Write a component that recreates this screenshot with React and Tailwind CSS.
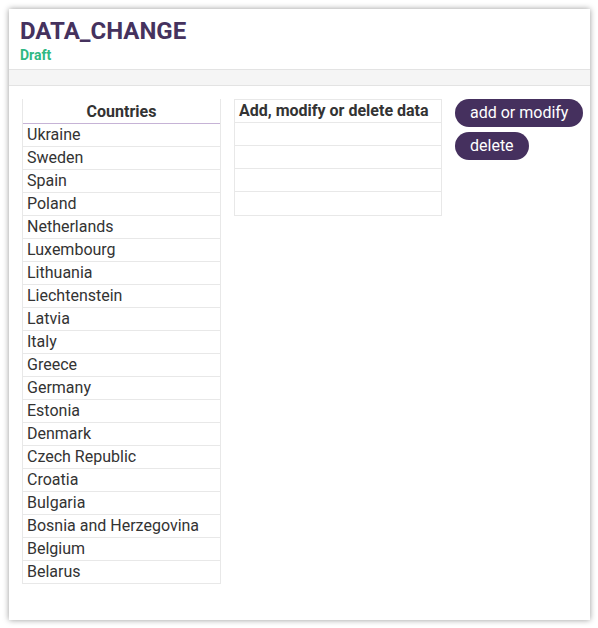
const countries = [
  'Ukraine', 'Sweden', 'Spain', 'Poland', 'Netherlands', 'Luxembourg', 'Lithuania',
  'Liechtenstein', 'Latvia', 'Italy', 'Greece', 'Germany', 'Estonia', 'Denmark',
  'Czech Republic', 'Croatia', 'Bulgaria', 'Bosnia and Herzegovina', 'Belgium', 'Belarus',
];

const App = () => {
  return (
    <div className='min-h-[628px] bg-white pt-[9px] pl-[9px] font-["Roboto",sans-serif] text-[#333]'>
      <div className='w-[581px] h-[611px] bg-white shadow-[0_0_6px_rgba(0,0,0,0.4)] flex flex-col'>
        {/* header */}
        <div className='px-[11px] pt-[8px] pb-[4px] border-b border-[#e3e3e3]'>
          <h1 className='text-[24px] leading-[28px] font-bold text-[#45325e]'>DATA_CHANGE</h1>
          <p className='text-[14px] leading-[20px] font-bold text-[#2fb883]'>Draft</p>
        </div>
        <div className='h-[16px] bg-[#f5f5f5] border-b border-[#e3e3e3]'></div>

        <div className='flex items-start pt-[13px] pl-[13px]'>
          {/* countries */}
          <div className='w-[199px] border-x border-[#e8e8e8]'>
            <div className='h-[25px] leading-[25px] text-center font-bold text-[16px] border-b border-[#c6b3d6]'>Countries</div>
            {countries.map((c) => (
              <div key={c} className='h-[23px] leading-[22px] px-[4px] text-[16px] border-b border-[#e8e8e8]'>{c}</div>
            ))}
          </div>

          {/* edit table */}
          <div className='ml-[13px] w-[208px] border border-[#e8e8e8]'>
            <div className='h-[23px] leading-[22px] px-[4px] font-bold text-[16px] border-b border-[#e8e8e8]'>Add, modify or delete data</div>
            <div className='h-[23px] border-b border-[#e8e8e8]'></div>
            <div className='h-[23px] border-b border-[#e8e8e8]'></div>
            <div className='h-[23px] border-b border-[#e8e8e8]'></div>
            <div className='h-[23px]'></div>
          </div>

          {/* actions */}
          <div className='ml-[13px] flex flex-col items-start gap-[5px]'>
            <button className='h-[28px] px-[15px] rounded-full bg-[#45305e] text-white text-[16px] leading-[28px]'>add or modify</button>
            <button className='h-[28px] px-[15px] rounded-full bg-[#45305e] text-white text-[16px] leading-[28px]'>delete</button>
          </div>
        </div>
      </div>
    </div>
  );
};

export default App;
